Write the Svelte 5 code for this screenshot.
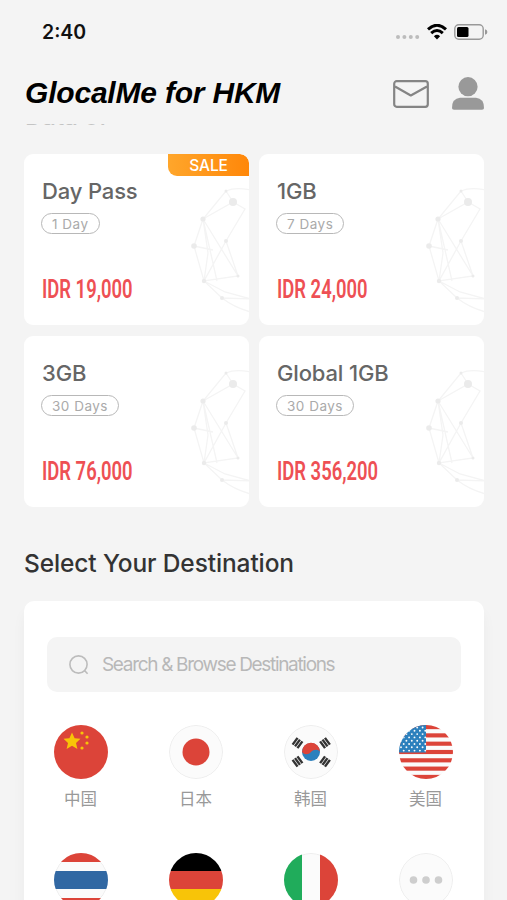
<script lang="ts">
  interface Plan {
    name: string;
    days: string;
    price: string;
    sale?: boolean;
  }

  const plans: Plan[] = [
    { name: 'Day Pass', days: '1 Day', price: 'IDR 19,000', sale: true },
    { name: '1GB', days: '7 Days', price: 'IDR 24,000' },
    { name: '3GB', days: '30 Days', price: 'IDR 76,000' },
    { name: 'Global 1GB', days: '30 Days', price: 'IDR 356,200' },
  ];

  const destinations = [
    { code: 'cn', label: '中国' },
    { code: 'jp', label: '日本' },
    { code: 'kr', label: '韩国' },
    { code: 'us', label: '美国' },
    { code: 'th' },
    { code: 'de' },
    { code: 'it' },
    { code: 'more' },
  ];

  // x, y, radius of each dot on the globe artwork
  const nodes = [
    [41, 4, 1.5],
    [48, 15, 4],
    [18, 32, 2.6],
    [9, 59, 2.8],
    [41, 54, 2],
    [19, 94, 2.2],
    [37, 111, 2],
    [53, 89, 1.5],
  ];

  const smallStars = [[28, 8], [33, 12], [33, 18], [28, 23]];
  const stripes = [0, 1, 2, 3, 4, 5, 6];
  const starRows = [0, 1, 2, 3, 4, 5, 6, 7];
  const starCols = [0, 1, 2, 3, 4];

  // corner trigrams of the Korean flag
  const trigrams = [
    [13.5, 18, -54],
    [41, 18, 54],
    [13.5, 36.5, 54],
    [41, 36.5, -54],
  ];

  let query = $state('');
</script>

<div class="screen">
  <div class="status-bar">
    <span class="time">2:40</span>
    <div class="indicators">
      <svg class="signal" width="24" height="4" viewBox="0 0 24 4">
        {#each [2, 8.4, 14.8, 21.2] as x}
          <circle cx={x} cy="2" r="2" />
        {/each}
      </svg>
      <svg class="wifi" width="20" height="16" viewBox="0 0 20 16">
        <path d="M1 5.4Q10 -2.8 19 5.4" />
        <path d="M4.2 9.1Q10 3.8 15.8 9.1" />
        <path class="wifi-dot" d="M10 15.5L6.9 12.2Q10 9.4 13.1 12.2Z" />
      </svg>
      <svg class="battery" width="34" height="16" viewBox="0 0 34 16">
        <rect class="shell" x="0.8" y="0.8" width="28.4" height="14.4" rx="4" />
        <rect x="3" y="3" width="11.5" height="10" rx="1.5" />
        <path class="tip" d="M31 5.2Q33.4 6 33.4 8T31 10.8Z" />
      </svg>
    </div>
  </div>

  <header>
    <h1>GlocalMe for HKM</h1>
    <div class="actions">
      <svg class="mail" width="36" height="28" viewBox="0 0 36 28">
        <rect x="1.2" y="1.2" width="33.6" height="25.6" rx="2.5" />
        <path d="M2 6.5L17.8 15.5L34 6.5" />
      </svg>
      <svg class="user" width="32" height="33" viewBox="0 0 32 33">
        <circle cx="16" cy="9.7" r="9.6" />
        <path d="M8 20.8H24Q32 21.5 32 31Q32 32.8 30 32.8H2Q0 32.8 0 31Q0 21.5 8 20.8Z" />
      </svg>
    </div>
  </header>

  <main>
    <div class="scrolled-heading"><h2>Data of</h2></div>

    <section class="plans">
      {#each plans as plan}
        <div class="plan">
          <svg class="globe" width="66" height="130" viewBox="0 0 66 130">
            <path d="M66 3Q50 0 41 4L18 32L9 59L19 94L37 111Q50 121 66 125M18 32L48 15L41 4M9 59L28 63M41 54L19 94L53 89L41 54L60 22L48 15M18 32L32 94M18 32L53 89M18 32L23 66L19 94M19 94L40 105L66 112M37 111L66 112" />
            {#each nodes as [cx, cy, r]}
              <circle {cx} {cy} {r} />
            {/each}
          </svg>
          {#if plan.sale}
            <span class="sale">SALE</span>
          {/if}
          <h3>{plan.name}</h3>
          <span class="days">{plan.days}</span>
          <span class="price">{plan.price}</span>
        </div>
      {/each}
    </section>

    <h2 class="section-title">Select Your Destination</h2>

    <section class="panel">
      <label class="search">
        <svg width="20" height="20" viewBox="0 0 20 20">
          <circle cx="9.5" cy="9.5" r="8.6" />
          <path d="M15.5 15.5L18.6 18.8" />
        </svg>
        <input type="text" placeholder="Search & Browse Destinations" bind:value={query} />
      </label>

      <div class="destinations">
        {#each destinations as dest}
          <div class="destination">
            <svg class="flag" width="54" height="54" viewBox="0 0 54 54">
              {#if dest.code === 'cn'}
                <rect class="red" width="54" height="54" />
                <path class="yellow" d="M18 7.5L20.6 13.2L26.5 13.8L22 17.9L23.4 24L18 20.8L12.6 24L14 17.9L9.5 13.8L15.4 13.2Z" />
                {#each smallStars as [x, y]}
                  <circle class="yellow" cx={x} cy={y} r="1.6" />
                {/each}
              {:else if dest.code === 'jp'}
                <rect class="white" width="54" height="54" />
                <circle class="red" cx="27" cy="27" r="13.5" />
                <circle class="ring" cx="27" cy="27" r="26.5" />
              {:else if dest.code === 'kr'}
                <rect class="white" width="54" height="54" />
                <circle class="sky" cx="27" cy="27" r="9" />
                <path class="red" d="M18 27A9 9 0 0 1 36 26.5C33.5 23.8 29.5 24.2 27 27S20.5 30.2 18 27Z" />
                {#each trigrams as [x, y, angle]}
                  <g class="trigram" transform="translate({x} {y}) rotate({angle})">
                    <path d="M-4.2 -3H4.2M-4.2 0H4.2M-4.2 3H4.2" />
                  </g>
                {/each}
                <circle class="ring" cx="27" cy="27" r="26.5" />
              {:else if dest.code === 'us'}
                <rect class="white" width="54" height="54" />
                {#each stripes as i}
                  <rect class="red" y={i * 8.31} width="54" height="4.15" />
                {/each}
                <rect class="sky" width="27" height="27.5" />
                {#each starRows as row}
                  {#each starCols as col}
                    <circle class="white" cx={2 + col * 5.4 + (row % 2) * 2.7} cy={2.5 + row * 3.3} r="0.95" />
                  {/each}
                {/each}
              {:else if dest.code === 'th'}
                <rect class="white" width="54" height="54" />
                <circle class="ring" cx="27" cy="27" r="26.5" />
                <rect class="red" width="54" height="9" />
                <rect class="blue" y="18" width="54" height="18" />
                <rect class="red" y="45" width="54" height="9" />
              {:else if dest.code === 'de'}
                <rect width="54" height="18" />
                <rect class="red" y="18" width="54" height="18" />
                <rect class="yellow" y="36" width="54" height="18" />
              {:else if dest.code === 'it'}
                <rect class="white" width="54" height="54" />
                <circle class="ring" cx="27" cy="27" r="26.5" />
                <rect class="green" width="18" height="54" />
                <rect class="red" x="36" width="18" height="54" />
              {:else}
                <rect class="white" width="54" height="54" />
                <circle class="ring" cx="27" cy="27" r="26.5" />
                {#each [14.5, 27, 39.5] as x}
                  <circle class="dot" cx={x} cy="27" r="3.8" />
                {/each}
              {/if}
            </svg>
            {#if dest.label}
              <span>{dest.label}</span>
            {/if}
          </div>
        {/each}
      </div>
    </section>
  </main>
</div>

<style>
  :global(body) {
    background: #f4f4f4;
    overflow: hidden;
  }

  .screen {
    width: 507px;
    height: 900px;
    box-sizing: border-box;
    overflow: hidden;
    background: #f4f4f4;
    font-family: Inter, 'Noto Sans CJK SC', sans-serif;
  }

  h1,
  h2,
  h3 {
    margin: 0;
  }

  svg {
    display: block;
    flex-shrink: 0;
  }

  .status-bar {
    display: flex;
    justify-content: space-between;
    align-items: center;
    height: 64px;
    padding: 0 19px 0 42px;
  }

  .time {
    font-size: 19.5px;
    font-weight: 600;
    color: #111;
  }

  .indicators {
    display: flex;
    align-items: center;
  }

  .signal {
    margin: 10px 7px 0 0;
    fill: #bcbcbc;
  }

  .wifi {
    margin-right: 7px;
    fill: none;
    stroke: #000;
    stroke-width: 3;
  }

  .wifi .wifi-dot {
    fill: #000;
    stroke: none;
  }

  .battery .shell {
    fill: none;
    stroke: #999;
    stroke-width: 1.4;
  }

  .battery .tip {
    fill: #999;
  }

  header {
    display: flex;
    justify-content: space-between;
    align-items: center;
    height: 60px;
    padding: 0 23px 0 25px;
    box-sizing: border-box;
  }

  h1 {
    padding-bottom: 2px;
    font: italic bold 30px/34px 'Liberation Sans', sans-serif;
    letter-spacing: -0.2px;
    color: #000;
    white-space: nowrap;
  }

  .actions {
    display: flex;
    align-items: center;
    gap: 23px;
  }

  .mail {
    fill: none;
    stroke: #858585;
    stroke-width: 2.2;
    stroke-linejoin: round;
  }

  .user {
    padding-bottom: 2px;
    fill: #999;
  }

  /* Heading is scrolled under the header, only its lower edge shows */
  .scrolled-heading {
    display: flex;
    align-items: flex-end;
    height: 3px;
    margin-left: 25px;
    overflow: hidden;
  }

  .scrolled-heading h2 {
    font-size: 24px;
    font-weight: 500;
    line-height: 20px;
    color: #c4c4c4;
  }

  .plans {
    display: grid;
    grid-template-columns: 225px 225px;
    grid-auto-rows: 171px;
    gap: 11px 10px;
    margin: 27px 0 0 24px;
  }

  .plan {
    position: relative;
    display: flex;
    flex-direction: column;
    align-items: flex-start;
    box-sizing: border-box;
    padding: 23px 17px 0;
    border-radius: 9px;
    background: #fff;
    overflow: hidden;
  }

  .globe {
    position: absolute;
    right: -2px;
    top: 33px;
    fill: #ebebeb;
  }

  .globe path {
    fill: none;
    stroke: #f4f4f4;
    stroke-width: 1.3;
  }

  .sale {
    position: absolute;
    top: 0;
    right: 0;
    width: 81px;
    height: 22px;
    border-radius: 0 9px 0 9px;
    background: linear-gradient(90deg, #ffa62b, #ff8709);
    color: #fff;
    font-size: 15.5px;
    font-weight: 500;
    line-height: 23px;
    letter-spacing: -0.1px;
    text-align: center;
  }

  h3 {
    padding-left: 1px;
    font-size: 22px;
    font-weight: 500;
    line-height: 28px;
    letter-spacing: -0.15px;
    color: #666;
  }

  .days {
    box-sizing: border-box;
    height: 21px;
    margin-top: 8px;
    padding: 0 10px;
    border: 1px solid #b8b8b8;
    border-radius: 11px;
    color: #aaa;
    font-size: 13.5px;
    line-height: 20px;
    letter-spacing: 0.5px;
  }

  .price {
    margin: 41px 0 0 1px;
    color: #ee5054;
    font-family: Roboto, sans-serif;
    font-size: 25.5px;
    font-weight: 600;
    line-height: 28px;
    white-space: nowrap;
    transform: scaleX(0.723);
    transform-origin: left;
  }

  .section-title {
    margin: 39px 0 0 24px;
    font-size: 24.5px;
    font-weight: 500;
    line-height: 35px;
    letter-spacing: -0.12px;
    color: #333;
  }

  .panel {
    width: 460px;
    height: 330px;
    box-sizing: border-box;
    margin: 20px 0 0 24px;
    padding: 36px 23px 0;
    border-radius: 10px 10px 0 0;
    background: #fff;
    box-shadow: 0 10px 14px rgba(0, 0, 0, 0.04);
  }

  .search {
    display: flex;
    align-items: center;
    gap: 13px;
    height: 55px;
    padding-left: 22px;
    border-radius: 10px;
    background: #f4f4f4;
  }

  .search svg {
    fill: none;
    stroke: #bcbcbc;
    stroke-width: 1.6;
  }

  .search input {
    flex: 1;
    min-width: 0;
    padding: 0;
    border: 0;
    outline: 0;
    background: none;
    font: 19px Inter, sans-serif;
    letter-spacing: -1.32px;
  }

  .search input::placeholder {
    color: #b8b8b8;
    opacity: 1;
  }

  .destinations {
    display: grid;
    grid-template-columns: repeat(4, 115px);
    grid-auto-rows: 128px;
    margin: 33px -22px 0 -24px;
  }

  .destination {
    display: flex;
    flex-direction: column;
    align-items: center;
    gap: 7px;
    color: #999;
    font-family: 'Noto Sans CJK SC', sans-serif;
    font-size: 16.5px;
    line-height: 24px;
  }

  .flag {
    border-radius: 50%;
  }

  .red { fill: #dc4439; }
  .yellow { fill: #f8c408; }
  .white { fill: #fbfbfb; }
  .sky { fill: #2c80bd; }
  .blue { fill: #3168a3; }
  .green { fill: #20ac5b; }
  .dot { fill: #cecece; }

  .ring {
    fill: none;
    stroke: #ededed;
  }

  .trigram {
    stroke: #333;
    stroke-width: 2.4;
  }
</style>
